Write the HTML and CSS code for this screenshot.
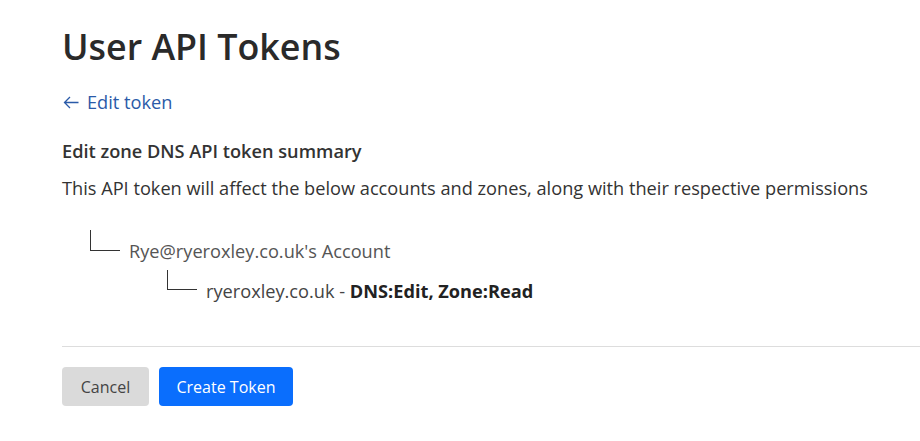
FILE: index.html
```html
<!DOCTYPE html>
<html>
<head>
<meta charset="utf-8">
<link rel="stylesheet" href="styles.css">
</head>
<body>
<div class="page">
  <h1 class="title">User API Tokens</h1>
  <a class="back" href="#"><svg class="arrow" width="16" height="13" viewBox="0 0 16 13" fill="none" stroke="currentColor" stroke-width="1.3"><path d="M15.5 6.5H1.5M7 1L1.5 6.5L7 12"/></svg>Edit token</a>
  <h2 class="summary-title">Edit zone DNS API token summary</h2>
  <p class="desc">This API token will affect the below accounts and zones, along with their respective permissions</p>
  <div class="tree">
    <div class="node level1"><span class="elbow"></span><span class="account">Rye@ryeroxley.co.uk's Account</span></div>
    <div class="node level2"><span class="elbow"></span><span class="zone">ryeroxley.co.uk - <strong>DNS:Edit, Zone:Read</strong></span></div>
  </div>
  <hr class="divider">
  <div class="actions">
    <button class="btn cancel">Cancel</button>
    <button class="btn primary">Create Token</button>
  </div>
</div>
</body>
</html>
```
FILE: styles.css
```css
* { box-sizing: border-box; }
html, body { margin: 0; padding: 0; background: #fff; }
body { font-family: "Open Sans", "Noto Sans", sans-serif; color: #333; }
.page { padding: 22px 0 0 62px; }
.title { margin: 0; font-size: 35.8px; font-weight: 600; color: #2a2a2a; line-height: 48px; }
.back { display: flex; align-items: center; gap: 8px; margin-top: 20px; color: #2a5aa8; text-decoration: none; font-size: 18.2px; line-height: 24px; width: max-content; }
.arrow { margin-left: 1px; }
.summary-title { margin: 25px 0 0; font-size: 18.2px; font-weight: 600; color: #333; line-height: 24px; }
.desc { margin: 13px 0 0; font-size: 18.2px; line-height: 24px; color: #333; }
.tree { margin-top: 30px; }
.node { display: flex; align-items: flex-start; font-size: 18.2px; color: #555; }
.level1 { padding-left: 28px; }
.level2 { padding-left: 105px; margin-top: 7px; }
.elbow { flex: none; width: 30px; border-left: 1px solid #333; border-bottom: 1px solid #333; margin-right: 9px; }
.level1 .elbow { height: 21px; }
.level2 .elbow { height: 20px; }
.account, .zone { line-height: 24px; margin-top: 9px; }
.zone { color: #444; }
.zone strong { color: #222; font-weight: 700; }
.divider { margin: 43px 0 0; border: 0; border-top: 1px solid #ddd; }
.actions { display: flex; gap: 10px; margin-top: 20px; }
.btn { font-family: inherit; font-size: 16px; height: 39px; border: 0; border-radius: 4px; padding: 0; }
.cancel { background: #dadada; color: #444; width: 87px; }
.primary { background: #0a6efd; color: #fff; width: 134px; }
```
